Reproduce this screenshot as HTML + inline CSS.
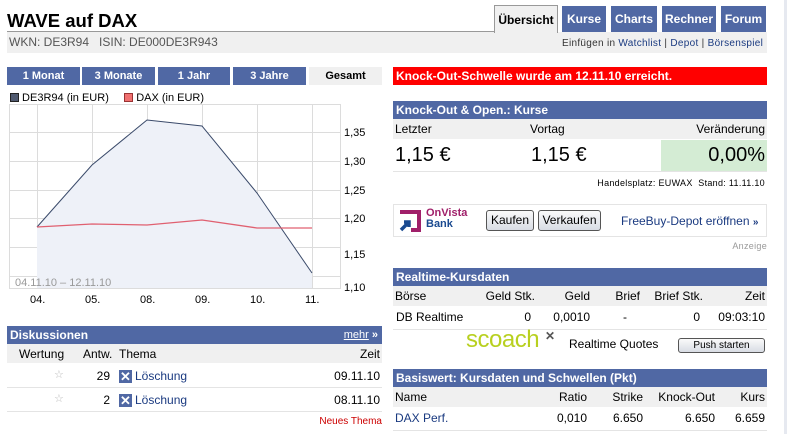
<!DOCTYPE html>
<html><head><meta charset="utf-8"><style>
*{margin:0;padding:0;box-sizing:border-box}
body{width:787px;height:434px;overflow:hidden;background:#fff;font-family:"Liberation Sans",Arial,sans-serif;font-size:12px;color:#000;position:relative}
.a{position:absolute}
.hd{background:#5068a4;color:#fff;font-weight:bold;font-size:12px;height:18px;line-height:18px;padding-left:3px}
.tab{position:absolute;top:6px;height:26px;background:#5068a4;color:#fff;font-weight:bold;font-size:12px;line-height:26px;text-align:center}
.rb{position:absolute;top:67px;height:18px;line-height:18px;background:#5068a4;color:#fff;font-weight:bold;font-size:11px;text-align:center}
.row{position:absolute;left:393px;width:374px;height:20px;line-height:20px;font-size:12px}
.r{position:absolute;text-align:right}
a{color:#1a3a80;text-decoration:none}
.btn{position:absolute;border:1px solid #555;border-radius:3px;background:linear-gradient(#fafafa,#d8dce4);font-size:12px;text-align:center;line-height:19px;height:21px}
</style></head><body>
<div class="a" style="left:7px;top:10px;font-size:18.5px;font-weight:bold">WAVE auf DAX</div>
<div class="a" style="left:7px;top:31px;width:489px;border-top:1px solid #999"></div>
<div class="a" style="left:7px;top:32px;width:760px;height:21px;background:#f0f0f0"></div>
<div class="a" style="left:9px;top:35px;font-size:12px;color:#555">WKN: DE3R94 &nbsp; ISIN: DE000DE3R943</div>
<div class="a" style="left:494px;top:5px;width:64px;height:28px;border:1px solid #999;border-bottom:none;background:#f0f0f0;font-weight:bold;text-align:center;line-height:28px">Übersicht</div>
<div class="tab" style="left:562px;width:44px">Kurse</div>
<div class="tab" style="left:611px;width:46px">Charts</div>
<div class="tab" style="left:662px;width:54px">Rechner</div>
<div class="tab" style="left:721px;width:45px">Forum</div>
<div class="a" style="left:562px;top:38px;font-size:10px;color:#333;letter-spacing:.3px">Einfügen in <a>Watchlist</a> | <a>Depot</a> | <a>Börsenspiel</a></div>
<div class="a" style="left:784px;top:0;width:3px;height:434px;background:#e6e9f0"></div>

<div class="rb" style="left:7px;width:73px">1 Monat</div>
<div class="rb" style="left:82px;width:73px">3 Monate</div>
<div class="rb" style="left:158px;width:72px">1 Jahr</div>
<div class="rb" style="left:233px;width:73px">3 Jahre</div>
<div class="rb" style="left:309px;width:73px;background:#f0f0f0;color:#000">Gesamt</div>
<div class="a" style="left:10px;top:92px;font-size:11px"><span style="display:inline-block;width:9px;height:9px;background:#505a70;border:1px solid #222;vertical-align:-1px"></span> DE3R94 (in EUR) &nbsp; &nbsp; <span style="display:inline-block;width:9px;height:9px;background:#f07070;border:1px solid #933;vertical-align:-1px"></span> DAX (in EUR)</div>
<svg class="a" style="left:0;top:100px" width="390" height="210">
<g stroke="#dcdcdc" stroke-width="1" fill="none">
<rect x="9.5" y="4.5" width="331" height="184"/>
<path d="M37.5 5V189M92.5 5V189M147.5 5V189M202.5 5V189M257.5 5V189M312.5 5V189M10 32.5H340M10 61.5H340M10 90.5H340M10 118.5H340M10 147.5H340M10 176.5H340"/>
</g>
<path d="M37 127L92 65L147 20L202 26L257 93L312 173V188H37Z" fill="#eef1f8"/>
<path d="M37 127L92 65L147 20L202 26L257 93L312 173" stroke="#3a4a6a" fill="none"/>
<path d="M37 127L92 124L147 125L202 120L257 128L312 128" stroke="#e06070" fill="none" stroke-width="1.3"/>
<text x="15" y="186" font-size="11" fill="#999" font-family="Liberation Sans">04.11.10 – 12.11.10</text>
<g font-size="11" font-family="Liberation Sans" fill="#000">
<text x="344" y="36">1,35</text><text x="344" y="65">1,30</text><text x="344" y="94">1,25</text><text x="344" y="122">1,20</text><text x="344" y="158">1,15</text><text x="344" y="191">1,10</text>
<text x="30" y="203">04.</text><text x="85" y="203">05.</text><text x="140" y="203">08.</text><text x="195" y="203">09.</text><text x="250" y="203">10.</text><text x="305" y="203">11.</text>
</g></svg>

<div class="a hd" style="left:7px;top:326px;width:375px">Diskussionen<span style="position:absolute;right:4px;font-weight:normal;font-size:11px"><u>mehr</u> <b>»</b></span></div>
<div class="a" style="left:7px;top:344px;width:375px;height:19px;background:#f0f0f0"></div>
<div class="a" style="left:19px;top:347px">Wertung</div><div class="a" style="left:83px;top:347px">Antw.</div><div class="a" style="left:119px;top:347px">Thema</div><div class="r" style="right:407px;top:347px">Zeit</div>
<div class="a" style="left:7px;top:387px;width:375px;border-top:1px solid #e4e4e4"></div>
<div class="a" style="left:7px;top:411px;width:375px;border-top:1px solid #e4e4e4"></div>
<div class="a" style="left:54px;top:368px;color:#bbb;font-size:11px">☆</div><div class="a" style="left:54px;top:392px;color:#bbb;font-size:11px">☆</div>
<div class="r" style="right:677px;top:369px">29</div><div class="r" style="right:677px;top:393px">2</div>
<div class="a" style="left:119px;top:370px;width:13px;height:13px;background:#5068a4;color:#fff;font-size:13px;line-height:13px;text-align:center;font-weight:bold">✕</div>
<div class="a" style="left:119px;top:394px;width:13px;height:13px;background:#5068a4;color:#fff;font-size:13px;line-height:13px;text-align:center;font-weight:bold">✕</div>
<div class="a" style="left:135px;top:369px"><a>Löschung</a></div><div class="a" style="left:135px;top:393px"><a>Löschung</a></div>
<div class="r" style="right:407px;top:369px">09.11.10</div><div class="r" style="right:407px;top:393px">08.11.10</div>
<div class="r" style="right:405px;top:416px;color:#c00;font-size:10px">Neues Thema</div>

<div class="a" style="left:393px;top:67px;width:374px;height:18px;background:#f00;color:#fff;font-weight:bold;line-height:18px;padding-left:3px">Knock-Out-Schwelle wurde am 12.11.10 erreicht.</div>
<div class="a hd" style="left:393px;top:101px;width:374px">Knock-Out &amp; Open.: Kurse</div>
<div class="row" style="top:119px;background:#f0f0f0"><span class="a" style="left:2px">Letzter</span><span class="a" style="left:137px">Vortag</span><span class="r" style="right:2px">Veränderung</span></div>
<div class="a" style="left:661px;top:140px;width:106px;height:31px;background:#d4ecd4"></div>
<div class="a" style="left:395px;top:144px;font-size:20px">1,15 €</div>
<div class="a" style="left:531px;top:144px;font-size:20px">1,15 €</div>
<div class="r" style="right:22px;top:144px;font-size:20px">0,00%</div>
<div class="a" style="left:393px;top:171px;width:374px;border-top:1px solid #e4e4e4"></div>
<div class="r" style="right:22px;top:178px;font-size:9px;letter-spacing:.3px">Handelsplatz: EUWAX &nbsp;Stand: 11.11.10</div>

<div class="a" style="left:393px;top:204px;width:374px;height:33px;border:1px solid #e4e4e4"></div>
<svg class="a" style="left:397px;top:209px" width="28" height="24"><path d="M3 3H22V21H14" stroke="#a0206a" stroke-width="4" fill="none"/><path d="M4 21L12 13M7 13H12V18" stroke="#1a4a90" stroke-width="3.5" fill="none"/></svg>
<div class="a" style="left:426px;top:208px;font-size:11px;font-weight:bold;color:#a0206a;line-height:11px">OnVista<br><span style="color:#1a4a90">Bank</span></div>
<div class="btn" style="left:486px;top:210px;width:48px">Kaufen</div>
<div class="btn" style="left:538px;top:210px;width:63px">Verkaufen</div>
<div class="a" style="left:621px;top:214px;color:#1a3a80">FreeBuy-Depot eröffnen <b style="font-size:10px">»</b></div>
<div class="r" style="right:20px;top:241px;font-size:9px;color:#999;letter-spacing:.3px">Anzeige</div>

<div class="a hd" style="left:393px;top:268px;width:374px">Realtime-Kursdaten</div>
<div class="row" style="top:286px;background:#f0f0f0"><span class="a" style="left:2px">Börse</span><span class="r" style="right:232px">Geld Stk.</span><span class="r" style="right:177px">Geld</span><span class="r" style="right:127px">Brief</span><span class="r" style="right:64px">Brief Stk.</span><span class="r" style="right:2px">Zeit</span></div>
<div class="row" style="top:307px"><span class="a" style="left:3px">DB Realtime</span><span class="r" style="right:236px">0</span><span class="r" style="right:177px">0,0010</span><span class="r" style="right:140px">-</span><span class="r" style="right:67px">0</span><span class="r" style="right:2px">09:03:10</span></div>
<div class="a" style="left:393px;top:329px;width:374px;border-top:1px solid #e4e4e4"></div>
<div class="a" style="left:466px;top:326px;font-size:24px;color:#b8d020;letter-spacing:-.5px">scoach</div>
<div class="a" style="left:545px;top:329px;font-size:12px;color:#555;font-weight:bold">✕</div>
<div class="a" style="left:569px;top:337px">Realtime Quotes</div>
<div class="btn" style="left:678px;top:338px;width:87px;height:15px;line-height:13px;font-size:10px">Push starten</div>

<div class="a hd" style="left:393px;top:369px;width:374px">Basiswert: Kursdaten und Schwellen (Pkt)</div>
<div class="row" style="top:387px;background:#f0f0f0"><span class="a" style="left:2px">Name</span><span class="r" style="right:180px">Ratio</span><span class="r" style="right:124px">Strike</span><span class="r" style="right:52px">Knock-Out</span><span class="r" style="right:2px">Kurs</span></div>
<div class="row" style="top:408px"><span class="a" style="left:2px"><a>DAX Perf.</a></span><span class="r" style="right:180px">0,010</span><span class="r" style="right:124px">6.650</span><span class="r" style="right:52px">6.650</span><span class="r" style="right:2px">6.659</span></div>
<div class="a" style="left:393px;top:430px;width:374px;border-top:1px solid #e4e4e4"></div>
</body></html>
